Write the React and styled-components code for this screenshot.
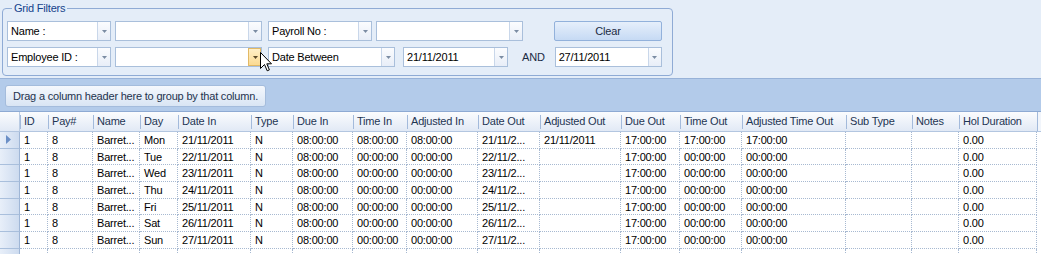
import React from 'react';
import styled, { createGlobalStyle } from 'styled-components';

const GlobalStyle = createGlobalStyle`
  html, body { margin: 0; padding: 0; }
  body {
    background: #e4edf8;
    font-family: "Liberation Sans", Arial, sans-serif;
    font-size: 11px;
    letter-spacing: -0.2px;
    overflow: hidden;
  }
  * { box-sizing: border-box; }
`;

const Screen = styled.div`
  position: relative;
  width: 1041px;
  height: 254px;
  overflow: hidden;
  display: flex;
  flex-direction: column;
  background: #e4edf8;
`;

const FilterArea = styled.div`
  flex: none;
  height: 78px;
  padding: 2px 0 0 2px;
`;

const GroupBox = styled.fieldset`
  width: 671px;
  margin: 0;
  padding: 6px 4px 8px 4px;
  border: 1px solid #8fabd5;
  border-radius: 4px;
  min-width: 0;
`;

const Legend = styled.legend`
  margin-left: 5px;
  padding: 0 2px;
  line-height: 13px;
  font-size: 11px;
  color: #15428b;
`;

const FilterRows = styled.div`
  display: flex;
  flex-direction: column;
  gap: 6px;
`;

const FilterRow = styled.div`
  display: flex;
  align-items: center;
  height: 20px;
`;

const ComboBox = styled.div`
  flex: none;
  display: flex;
  width: ${(p) => p.$w}px;
  height: 20px;
  margin-left: ${(p) => p.$ml || 0}px;
  border: 1px solid #a9bfdb;
  background: #fff;
`;

const ComboText = styled.div`
  flex: 1;
  min-width: 0;
  padding-left: 3px;
  line-height: 18px;
  color: #000;
  white-space: nowrap;
  overflow: hidden;
`;

const DropButton = styled.div`
  flex: none;
  width: 13px;
  display: flex;
  align-items: center;
  justify-content: center;
  border-left: 1px solid ${(p) => (p.$hot ? '#e2b965' : '#c9d7ea')};
  background: ${(p) =>
    p.$hot
      ? 'linear-gradient(#fff1cb, #fbd98f)'
      : 'linear-gradient(#fbfcfe, #e8eef8)'};
  ${(p) => (p.$hot ? 'outline: 1px solid #e2b965; outline-offset: -1px;' : '')}
`;

const ClearButton = styled.button`
  flex: none;
  width: 108px;
  height: 20px;
  margin-left: ${(p) => p.$ml || 0}px;
  border: 1px solid #92b1db;
  border-radius: 2px;
  background: linear-gradient(#e6effb, #c6daf4);
  font-family: inherit;
  font-size: 11px;
  letter-spacing: inherit;
  color: #1b2b44;
  padding: 0;
`;

const AndLabel = styled.span`
  flex: none;
  margin-left: ${(p) => p.$ml || 0}px;
  line-height: 20px;
  color: #1b2b44;
`;

const GroupBand = styled.div`
  flex: none;
  height: 33px;
  border-top: 1px solid #97b2d8;
  background: #b3cbea;
  padding: 6px 0 0 5px;
`;

const GroupHint = styled.div`
  width: 261px;
  height: 22px;
  border: 1px solid #a4bcdc;
  border-radius: 3px;
  background: linear-gradient(#f5f8fd, #d9e5f4);
  padding-left: 7px;
  line-height: 20px;
  color: #1f334d;
  white-space: nowrap;
`;

const COLS =
  '20px 28px 45px 47px 38px 73px 42px 60px 54px 71px 62px 81px 59px 62px 104px 66px 47px 78px 1fr';

const Grid = styled.div`
  flex: 1;
  background: #fff;
  overflow: hidden;
`;

const HeaderRow = styled.div`
  display: grid;
  grid-template-columns: ${COLS};
  height: 21px;
  border-top: 1px solid #8eaad3;
  border-bottom: 1px solid #b3c6e0;
  background: linear-gradient(#fbfcfe, #e1e9f5);
`;

const HeadCell = styled.div`
  position: relative;
  padding-left: 4px;
  line-height: 19px;
  color: #1e3553;
  white-space: nowrap;
  overflow: hidden;
  &::before {
    content: '';
    position: absolute;
    left: 0;
    top: 3px;
    bottom: 2px;
    width: 1px;
    background: #a3badb;
  }
`;

const HeadIndicator = styled.div`
  border-right: 1px solid #b9cbe3;
`;

const HeadFiller = styled.div`
  background: #f1f5fb;
  border-left: 1px solid #a3badb;
`;

const DataRow = styled.div`
  display: grid;
  grid-template-columns: ${COLS};
  height: 16.67px;
`;

const Cell = styled.div`
  padding-left: 4px;
  border-right: 1px dotted #a7b9d1;
  border-bottom: 1px dotted #a7b9d1;
  line-height: 16px;
  color: #000;
  white-space: nowrap;
  overflow: hidden;
`;

const RowIndicator = styled.div`
  display: flex;
  align-items: center;
  padding-left: 6px;
  border-right: 1px solid #9fb6d6;
  border-bottom: 1px solid #a9bfdc;
  background: linear-gradient(90deg, #e8eff9, #cddbef);
`;

const Filler = styled.div``;

const CursorWrap = styled.div`
  position: absolute;
  left: 260px;
  top: 52px;
  width: 12px;
  height: 20px;
  pointer-events: none;
`;

const Arrow = ({ hot }) => (
  <svg width="5" height="3" viewBox="0 0 5 3">
    <path d="M0 0H5L2.5 3Z" fill={hot ? '#5a4a2a' : '#7b8ca3'} />
  </svg>
);

const Combo = ({ w, ml, text, hot }) => (
  <ComboBox $w={w} $ml={ml}>
    <ComboText>{text}</ComboText>
    <DropButton $hot={hot}>
      <Arrow hot={hot} />
    </DropButton>
  </ComboBox>
);

const columns = [
  'ID', 'Pay#', 'Name', 'Day', 'Date In', 'Type', 'Due In', 'Time In',
  'Adjusted In', 'Date Out', 'Adjusted Out', 'Due Out', 'Time Out',
  'Adjusted Time Out', 'Sub Type', 'Notes', 'Hol Duration',
];

const days = ['Mon', 'Tue', 'Wed', 'Thu', 'Fri', 'Sat', 'Sun'];

const rows = days.map((d, i) => {
  const first = i === 0;
  const day = 21 + i;
  return [
    '1', '8', 'Barret...', d, `${day}/11/2011`, 'N', '08:00:00',
    first ? '08:00:00' : '00:00:00',
    first ? '08:00:00' : '00:00:00',
    `${day}/11/2...`,
    first ? '21/11/2011' : '',
    '17:00:00',
    first ? '17:00:00' : '00:00:00',
    first ? '17:00:00' : '00:00:00',
    '', '', '0.00',
  ];
});

export default function App() {
  return (
    <>
      <GlobalStyle />
      <Screen>
        <FilterArea>
          <GroupBox>
            <Legend>Grid Filters</Legend>
            <FilterRows>
              <FilterRow>
                <Combo w={104} text="Name :" />
                <Combo w={147} ml={4} text="" />
                <Combo w={104} ml={6} text="Payroll No :" />
                <Combo w={147} ml={4} text="" />
                <ClearButton $ml={31}>Clear</ClearButton>
              </FilterRow>
              <FilterRow>
                <Combo w={104} text="Employee ID :" />
                <Combo w={147} ml={4} text="" hot />
                <Combo w={127} ml={6} text="Date Between" />
                <Combo w={105} ml={8} text="21/11/2011" />
                <AndLabel $ml={14}>AND</AndLabel>
                <Combo w={107} ml={10} text="27/11/2011" />
              </FilterRow>
            </FilterRows>
          </GroupBox>
        </FilterArea>
        <GroupBand>
          <GroupHint>Drag a column header here to group by that column.</GroupHint>
        </GroupBand>
        <Grid>
          <HeaderRow>
            <HeadIndicator />
            {columns.map((c) => (
              <HeadCell key={c}>{c}</HeadCell>
            ))}
            <HeadFiller />
          </HeaderRow>
          {rows.map((r, i) => (
            <DataRow key={i}>
              <RowIndicator>
                {i === 0 && (
                  <svg width="5" height="9" viewBox="0 0 5 9">
                    <path d="M0 0L5 4.5L0 9Z" fill="#6b8fc6" />
                  </svg>
                )}
              </RowIndicator>
              {r.map((v, j) => (
                <Cell key={j}>{v}</Cell>
              ))}
              <Filler />
            </DataRow>
          ))}
          <DataRow>
            <RowIndicator />
            {columns.map((c) => (
              <Cell key={c} />
            ))}
            <Filler />
          </DataRow>
        </Grid>
        <CursorWrap>
          <svg width="12" height="20" viewBox="0 0 12 20">
            <path
              d="M0.5 0.5V16.5L4.5 12.5L7.2 18.8L9.4 17.9L6.8 11.8H11.5Z"
              fill="#fff"
              stroke="#000"
              strokeWidth="1"
              strokeLinejoin="miter"
            />
          </svg>
        </CursorWrap>
      </Screen>
    </>
  );
}
